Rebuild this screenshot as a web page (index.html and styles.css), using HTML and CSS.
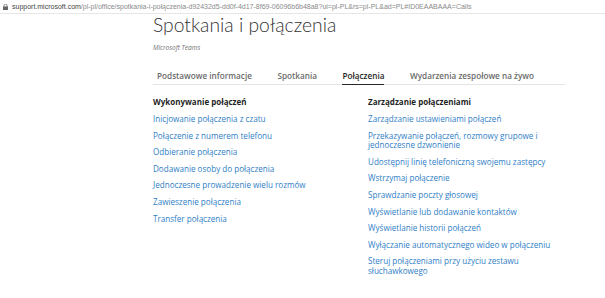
FILE: index.html
```html
<!DOCTYPE html>
<html lang="pl">
<head>
  <meta charset="UTF-8">
  <title>Spotkania i połączenia</title>
  <link rel="stylesheet" href="styles.css">
</head>
<body>
  <div class="address-bar">
    <svg class="lock" width="5" height="6" viewBox="0 0 5 6">
      <rect x="0" y="2.4" width="5" height="3.6" fill="#666"/>
      <path d="M1 2.6V1.6a1.5 1.5 0 0 1 3 0v1" fill="none" stroke="#666" stroke-width="0.8"/>
    </svg>
    <span class="host">support.microsoft.com</span><span class="path">/pl-pl/office/spotkania-i-połączenia-d92432d5-dd0f-4d17-8f69-06096b6b48a8?ui=pl-PL&amp;rs=pl-PL&amp;ad=PL#ID0EAABAAA=Calls</span>
  </div>

  <div class="page">
    <h1 class="title">Spotkania i połączenia</h1>
    <div class="product">Microsoft Teams</div>

    <nav class="tabs">
      <a class="tab">Podstawowe informacje</a>
      <a class="tab">Spotkania</a>
      <a class="tab active">Połączenia</a>
      <a class="tab">Wydarzenia zespołowe na żywo</a>
    </nav>

    <div class="columns">
      <div class="column">
        <h2>Wykonywanie połączeń</h2>
        <ul>
          <li><a href="#">Inicjowanie połączenia z czatu</a></li>
          <li><a href="#">Połączenie z numerem telefonu</a></li>
          <li><a href="#">Odbieranie połączenia</a></li>
          <li><a href="#">Dodawanie osoby do połączenia</a></li>
          <li><a href="#">Jednoczesne prowadzenie wielu rozmów</a></li>
          <li><a href="#">Zawieszenie połączenia</a></li>
          <li><a href="#">Transfer połączenia</a></li>
        </ul>
      </div>
      <div class="column">
        <h2>Zarządzanie połączeniami</h2>
        <ul>
          <li><a href="#">Zarządzanie ustawieniami połączeń</a></li>
          <li><a href="#">Przekazywanie połączeń, rozmowy grupowe i jednoczesne dzwonienie</a></li>
          <li><a href="#">Udostępnij linię telefoniczną swojemu zastępcy</a></li>
          <li><a href="#">Wstrzymaj połączenie</a></li>
          <li><a href="#">Sprawdzanie poczty głosowej</a></li>
          <li><a href="#">Wyświetlanie lub dodawanie kontaktów</a></li>
          <li><a href="#">Wyświetlanie historii połączeń</a></li>
          <li><a href="#">Wyłączanie automatycznego wideo w połączeniu</a></li>
          <li><a href="#">Steruj połączeniami przy użyciu zestawu słuchawkowego</a></li>
        </ul>
      </div>
    </div>
  </div>
</body>
</html>
```

FILE: styles.css
```css
* {
  margin: 0;
  padding: 0;
  box-sizing: border-box;
}

body {
  background-color: #fff;
  font-family: 'Open Sans', 'Noto Sans', sans-serif;
  color: #262626;
  width: 605px;
  height: 298px;
  overflow: hidden;
}

.address-bar {
  display: flex;
  align-items: center;
  height: 14px;
  padding-left: 3px;
  border-bottom: 1px solid #e6e6e6;
  font-family: 'Liberation Sans', Arial, sans-serif;
  font-size: 7px;
  line-height: 12px;
  white-space: nowrap;
  overflow: hidden;
}

.lock {
  margin-right: 4px;
  flex-shrink: 0;
}

.host {
  color: #444;
}

.path {
  color: #8a8a8a;
}

.page {
  padding-left: 153px;
}

.title {
  font-family: 'Lato', 'Open Sans', sans-serif;
  font-weight: 300;
  font-size: 19.3px;
  line-height: 21px;
  color: #333;
}

.product {
  font-size: 6.5px;
  font-style: italic;
  color: #707070;
  margin-top: 8px;
}

.tabs {
  display: flex;
  gap: 25.5px;
  width: 412px;
  margin-top: 18px;
  padding-left: 4px;
  border-bottom: 1px solid #e4e4e4;
}

.tab {
  font-size: 8.2px;
  font-weight: 600;
  color: #6b6b6b;
  padding-bottom: 3px;
  border-bottom: 1px solid transparent;
  margin-bottom: -1px;
}

.tab.active {
  color: #1f1f1f;
  border-bottom-color: #262626;
}

.columns {
  display: grid;
  grid-template-columns: 215px 192px;
  margin-top: 12px;
}

.column h2 {
  font-size: 8px;
  font-weight: 700;
  color: #1f1f1f;
  line-height: 10px;
  margin-bottom: 7px;
}

.column ul {
  list-style: none;
}

.column li {
  font-size: 8.1px;
  line-height: 9.6px;
  margin-bottom: 7px;
}

.column a {
  color: #2f80c6;
  text-decoration: none;
}
```
